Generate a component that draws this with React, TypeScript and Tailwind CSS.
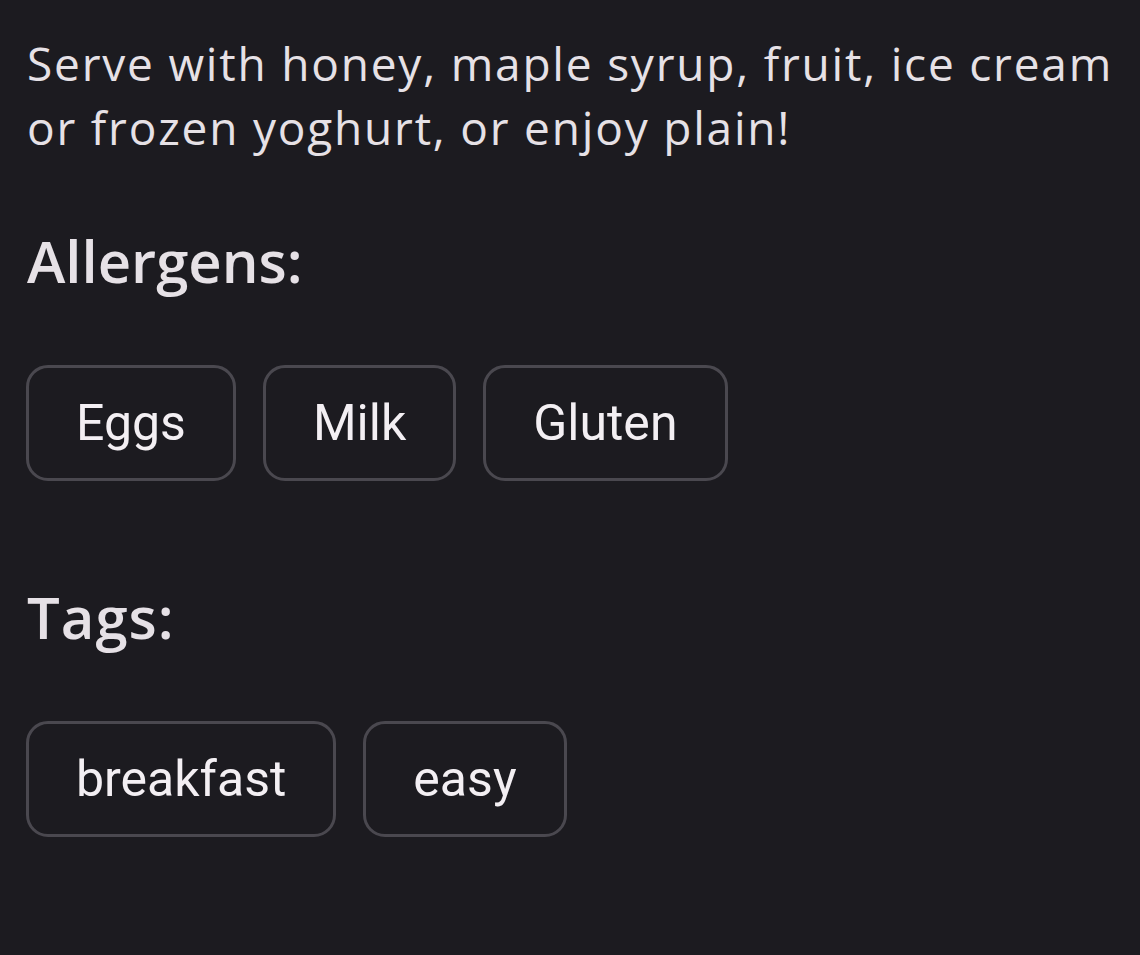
const allergens = ['Eggs', 'Milk', 'Gluten'];
const tags = ['breakfast', 'easy'];

function Chip({ label }: { label: string }) {
  return (
    <div className="h-[116px] px-[47px] flex items-center rounded-[22px] border-[3px] border-[#4a484f] text-[50px] text-[#f3eff3] font-['Roboto',sans-serif]">
      {label}
    </div>
  );
}

export default function App() {
  return (
    <div className="min-h-[955px] w-[1140px] bg-[#1c1b20] px-[26px] pt-[31px] text-[#e6e1e6] font-['Open_Sans',sans-serif]">
      <p className="text-[46px] leading-[64px] tracking-[1.8px] pl-px mr-[-16px]">
        Serve with honey, maple syrup, fruit, ice cream or frozen yoghurt, or enjoy plain!
      </p>

      <h2 className="mt-[66px] text-[58px] leading-[72px] font-semibold pl-px">Allergens:</h2>
      <div className="mt-[68px] flex gap-[27px]">
        {allergens.map((a) => (
          <Chip key={a} label={a} />
        ))}
      </div>

      <h2 className="mt-[100px] text-[58px] leading-[72px] font-semibold pl-px tracking-[1px]">Tags:</h2>
      <div className="mt-[68px] flex gap-[27px]">
        {tags.map((t) => (
          <Chip key={t} label={t} />
        ))}
      </div>
    </div>
  );
}
